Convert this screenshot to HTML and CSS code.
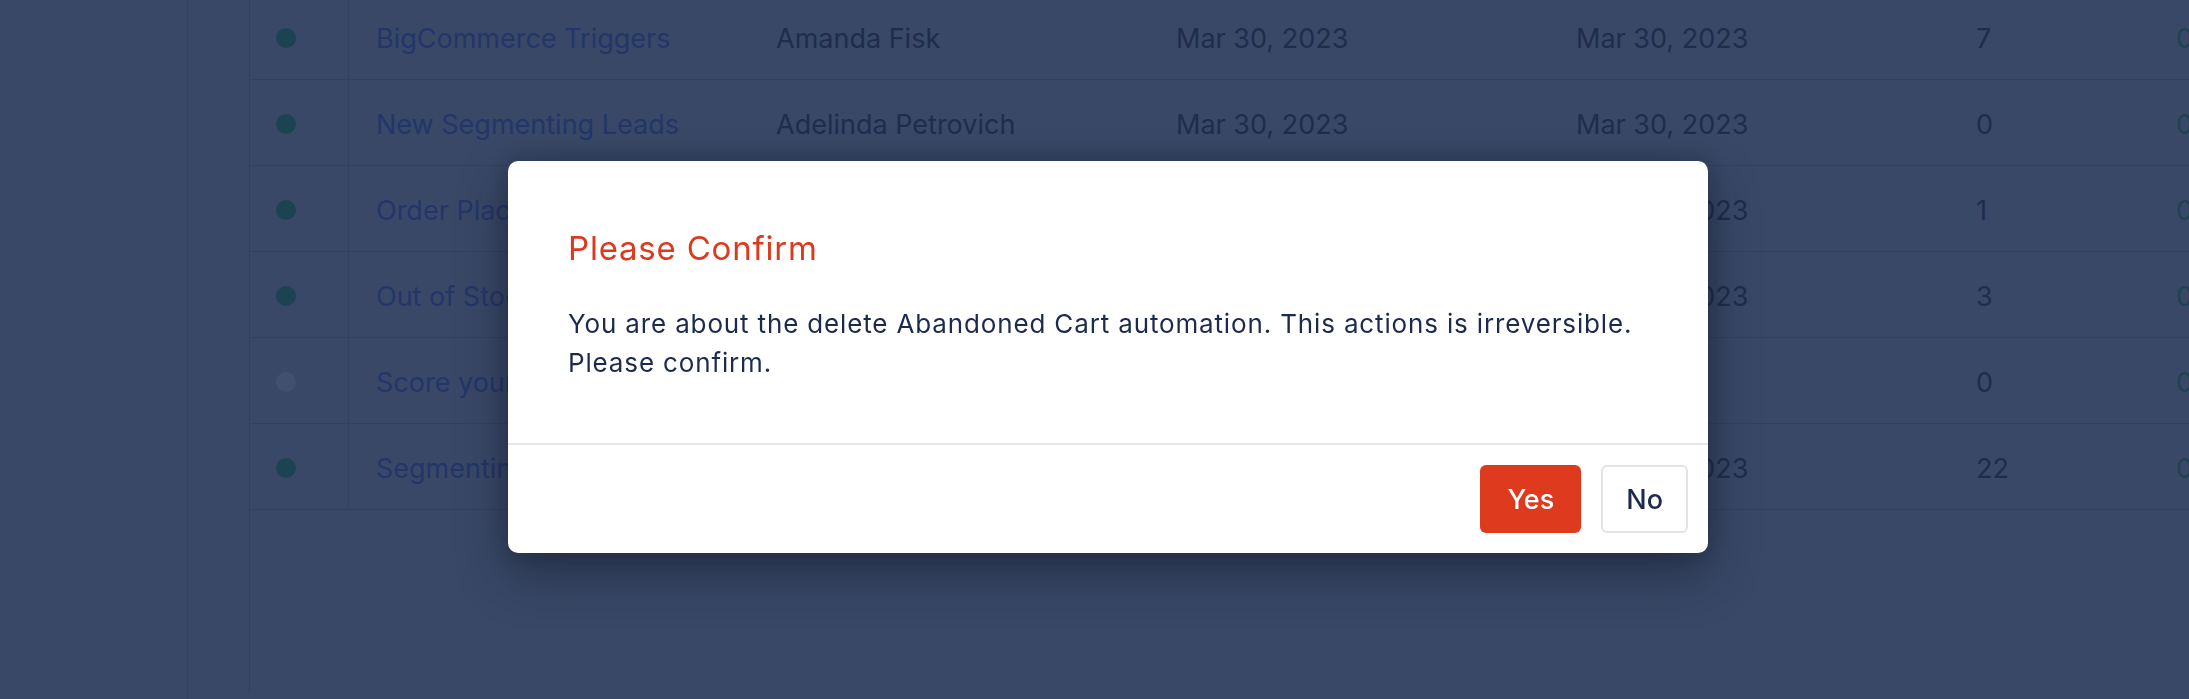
FILE: index.html
```html
<!DOCTYPE html>
<html lang="en">
<head>
<meta charset="utf-8">
<title>Automations</title>
<link rel="stylesheet" href="styles.css">
</head>
<body>
<div class="app">
  <aside class="sidebar"></aside>
  <main class="main">
    <div class="panel">
      <div class="rows">
        <div class="row">
          <div class="cell cell-status"><span class="dot dot-on"></span></div>
          <div class="cell cell-name"><a class="link">BigCommerce Triggers</a></div>
          <div class="cell">Amanda Fisk</div>
          <div class="cell">Mar 30, 2023</div>
          <div class="cell">Mar 30, 2023</div>
          <div class="cell cell-narrow">7</div>
          <div class="cell cell-narrow cell-rate">0%</div>
        </div>
        <div class="row">
          <div class="cell cell-status"><span class="dot dot-on"></span></div>
          <div class="cell cell-name"><a class="link">New Segmenting Leads</a></div>
          <div class="cell">Adelinda Petrovich</div>
          <div class="cell">Mar 30, 2023</div>
          <div class="cell">Mar 30, 2023</div>
          <div class="cell cell-narrow">0</div>
          <div class="cell cell-narrow cell-rate">0%</div>
        </div>
        <div class="row">
          <div class="cell cell-status"><span class="dot dot-on"></span></div>
          <div class="cell cell-name"><a class="link">Order Placed</a></div>
          <div class="cell">Amanda Fisk</div>
          <div class="cell">Mar 30, 2023</div>
          <div class="cell">Mar 30, 2023</div>
          <div class="cell cell-narrow">1</div>
          <div class="cell cell-narrow cell-rate">0%</div>
        </div>
        <div class="row">
          <div class="cell cell-status"><span class="dot dot-on"></span></div>
          <div class="cell cell-name"><a class="link">Out of Stock</a></div>
          <div class="cell">Amanda Fisk</div>
          <div class="cell">Mar 30, 2023</div>
          <div class="cell">Mar 30, 2023</div>
          <div class="cell cell-narrow">3</div>
          <div class="cell cell-narrow cell-rate">0%</div>
        </div>
        <div class="row">
          <div class="cell cell-status"><span class="dot dot-off"></span></div>
          <div class="cell cell-name"><a class="link">Score your leads</a></div>
          <div class="cell">Amanda Fisk</div>
          <div class="cell">Mar 30, 2023</div>
          <div class="cell"></div>
          <div class="cell cell-narrow">0</div>
          <div class="cell cell-narrow cell-rate">0%</div>
        </div>
        <div class="row">
          <div class="cell cell-status"><span class="dot dot-on"></span></div>
          <div class="cell cell-name"><a class="link">Segmenting Customers</a></div>
          <div class="cell">Amanda Fisk</div>
          <div class="cell">Mar 30, 2023</div>
          <div class="cell">Mar 30, 2023</div>
          <div class="cell cell-narrow">22</div>
          <div class="cell cell-narrow cell-rate">0%</div>
        </div>
      </div>
    </div>
  </main>
</div>

<div class="modal" role="dialog" aria-modal="true">
  <div class="modal-body">
    <h2 class="modal-title">Please Confirm</h2>
    <p class="modal-text">You are about the delete Abandoned Cart automation. This actions is irreversible.<br>Please confirm.</p>
  </div>
  <div class="modal-footer">
    <button class="btn btn-danger">Yes</button>
    <button class="btn btn-outline">No</button>
  </div>
</div>
</body>
</html>
```
FILE: styles.css
```css
html, body {
  margin: 0;
  padding: 0;
  height: 100%;
  overflow: hidden;
}

body {
  background: #394866;
  font-family: Inter, "Noto Sans", sans-serif;
  font-size: 27px;
  color: #1f2c4c;
}

.app {
  display: flex;
  height: 100vh;
}

.sidebar {
  flex: none;
  width: 188px;
  box-sizing: border-box;
  border-right: 1px solid #34415e;
}

.main {
  flex: 1;
  padding-left: 61px;
  min-width: 0;
}

.panel {
  height: 100%;
  border-left: 1px solid #34415e;
}

.rows {
  margin-top: -6px;
}

.row {
  display: grid;
  grid-template-columns: 99px 400px 400px 400px 400px 200px 200px;
  height: 86px;
  box-sizing: border-box;
  border-bottom: 1px solid #34415e;
  white-space: nowrap;
}

.cell {
  display: flex;
  align-items: center;
  padding-left: 27px;
  padding-top: 3px;
}

.cell-status {
  padding-left: 26px;
  border-right: 1px solid #34415e;
}

.dot {
  width: 20px;
  height: 20px;
  border-radius: 50%;
}

.dot-on {
  background: #1b4352;
}

.dot-off {
  background: #434f6f;
}

.link {
  color: #22366a;
  text-decoration: none;
}

.cell-rate {
  color: #1e4351;
}

.modal {
  position: fixed;
  left: 508px;
  top: 161px;
  width: 1200px;
  background: #ffffff;
  border-radius: 10px;
  box-shadow: 0 22px 50px rgba(16, 22, 40, 0.45), 0 0 24px rgba(16, 22, 40, 0.25);
  overflow: hidden;
}

.modal-body {
  padding: 67px 60px 61px 60px;
}

.modal-title {
  margin: 0 0 36px 0;
  font-size: 33px;
  line-height: 40px;
  font-weight: 400;
  color: #dc3a1e;
  letter-spacing: 0.8px;
}

.modal-text {
  margin: 0;
  font-size: 26px;
  line-height: 39px;
  color: #1c2b4d;
  letter-spacing: 0.85px;
}

.modal-footer {
  display: flex;
  justify-content: flex-end;
  gap: 20px;
  padding: 20px 20px;
  border-top: 2px solid #e5e7eb;
}

.btn {
  height: 68px;
  box-sizing: border-box;
  border-radius: 6px;
  font-family: Inter, "Noto Sans", sans-serif;
  font-size: 27px;
  font-weight: 500;
  cursor: pointer;
}

.btn-danger {
  background: #de3a1e;
  color: #ffffff;
  border: none;
  padding: 0 27px;
}

.btn-outline {
  background: #ffffff;
  color: #1c2b4d;
  border: 2px solid #e2e4e9;
  padding: 0 23px;
}
```
